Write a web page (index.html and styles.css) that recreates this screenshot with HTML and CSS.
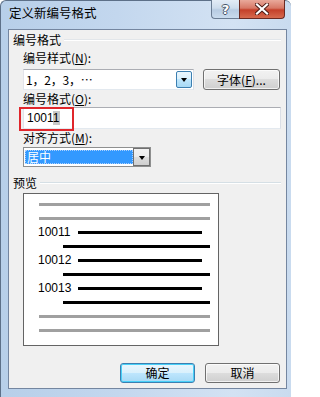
FILE: index.html
```html
<!DOCTYPE html>
<html>
<head>
<meta charset="utf-8">
<link rel="stylesheet" href="styles.css">
</head>
<body>
<div class="window">
  <div class="titlebar">
    <span class="title">定义新编号格式</span>
    <div class="caption">
      <div class="cbtn help"><span class="q">?</span></div>
      <div class="cbtn close">
        <svg width="14" height="12" viewBox="0 0 14 12"><path d="M2 1.5 L12 10.5 M12 1.5 L2 10.5" stroke="#4a1a14" stroke-width="4" stroke-linecap="square"/><path d="M2 1.5 L12 10.5 M12 1.5 L2 10.5" stroke="#ffffff" stroke-width="2.2" stroke-linecap="square"/></svg>
      </div>
    </div>
  </div>
  <div class="client">
    <div class="legend"><span>编号格式</span><i class="rule faint"></i></div>
    <div class="sub">
      <div class="label l1">编号样式(<u>N</u>):</div>
      <div class="row">
        <div class="combo">
          <span class="ctext">1，2，3，…</span>
          <div class="drop hot"><i class="arrow"></i></div>
        </div>
        <div class="btn font">字体(<u>F</u>)...</div>
      </div>
      <div class="label l2">编号格式(<u>O</u>):</div>
      <div class="inputwrap">
        <div class="input">1001<span class="sel">1</span></div>
        <div class="redbox"></div>
      </div>
      <div class="label l2">对齐方式(<u>M</u>):</div>
      <div class="select">
        <span class="selval">居中</span>
        <div class="drop"><i class="arrow"></i></div>
      </div>
    </div>
    <div class="legend l-prev"><span>预览</span><i class="rule"></i></div>
    <div class="sub">
      <div class="preview">
        <div class="pl"><i class="bar gray"></i></div>
        <div class="pl"><i class="bar gray"></i></div>
        <div class="pl num"><span class="n">10011</span><i class="bar first"></i></div>
        <div class="pl"><i class="bar cont"></i></div>
        <div class="pl num"><span class="n">10012</span><i class="bar first"></i></div>
        <div class="pl"><i class="bar cont"></i></div>
        <div class="pl num"><span class="n">10013</span><i class="bar first"></i></div>
        <div class="pl"><i class="bar cont"></i></div>
        <div class="pl"><i class="bar gray"></i></div>
        <div class="pl"><i class="bar gray"></i></div>
      </div>
    </div>
    <div class="buttons">
      <div class="btn ok">确定</div>
      <div class="btn cancel">取消</div>
    </div>
  </div>
</div>
</body>
</html>
```
FILE: styles.css
```css
* { box-sizing: border-box; }
html, body { margin: 0; padding: 0; }
body {
  width: 291px;
  height: 397px;
  overflow: hidden;
  font-family: "Noto Sans CJK SC", "Noto Sans", sans-serif;
  font-size: 12px;
  color: #000;
  background: #fff;
}
.window {
  width: 291px;
  height: 397px;
  padding: 0 4px 0 8px;
  background: linear-gradient(to right, #b7cfe9 0%, #c3d7ee 40%, #d3e2f3 80%, #c9dbef 100%);
  border-radius: 6px 6px 0 0;
  border-left: 1px solid #5d7088;
  border-top: 1px solid #5d7088;
  display: flex;
  flex-direction: column;
  margin-left: 0;
}
.window { padding-left: 7px; }
.titlebar {
  height: 28px;
  display: flex;
  align-items: flex-start;
  justify-content: space-between;
  margin-right: 1px;
}
.title {
  margin-top: 4px;
  margin-left: 1px;
  line-height: 16px;
  font-size: 12.5px;
  color: #000;
}
.caption {
  display: flex;
  margin-top: -1px;
  margin-right: 1px;
}
.cbtn {
  height: 19px;
  display: flex;
  align-items: center;
  justify-content: center;
  border: 1px solid #6a7c93;
  border-top: none;
}
.help {
  width: 28px;
  border-radius: 0 0 0 4px;
  border-right: none;
  background: linear-gradient(to bottom, #e3ecf6 0%, #cddcec 45%, #b7cbe2 55%, #c9dbee 100%);
}
.q {
  font-family: "DejaVu Sans", sans-serif;
  font-weight: bold;
  font-size: 13px;
  line-height: 13px;
  color: #fff;
  text-shadow: -1px 0 #47556a, 1px 0 #47556a, 0 -1px #47556a, 0 1px #47556a;
}
.close {
  width: 46px;
  border-radius: 0 0 4px 0;
  border-color: #6b2a22;
  background: linear-gradient(to bottom, #e9a99b 0%, #d77866 45%, #c4402a 55%, #d66a4e 100%);
}
.client {
  width: 279px;
  height: 360px;
  border: 1px solid #7486a0;
  background: #f0f0f0;
  padding: 3px 0 0 4px;
}
.legend {
  height: 14px;
  line-height: 14px;
  display: flex;
  align-items: center;
  margin-right: 5px;
}
.legend span { padding-right: 3px; }
.rule {
  flex: 1;
  height: 2px;
  border-top: 1px solid #d5dfe5;
  border-bottom: 1px solid #ffffff;
}
.rule.faint { border-top-color: #e2e6ea; }
.l-prev { margin-top: 9px; }
.sub {
  margin-left: 10px;
  margin-right: 5px;
}
.label {
  height: 14px;
  line-height: 14px;
}
.l1 { margin-top: 4px; }
.l2 { margin-top: 2px; }
.row {
  margin-top: 4px;
  height: 21px;
  display: flex;
  gap: 9px;
}
.combo {
  width: 171px;
  height: 21px;
  background: #fff;
  border: 1px solid #abadb3;
  border-color: #abadb3 #dbdfe6 #e3e9ef #e2e3ea;
  display: flex;
  align-items: center;
  justify-content: space-between;
  padding: 0 1px 0 2px;
}
.ctext {
  line-height: 14px;
  letter-spacing: -0.2px;
}
.drop {
  width: 16px;
  height: 17px;
  border: 1px solid #8a8a8a;
  border-radius: 2px;
  background: linear-gradient(to bottom, #f2f2f2 0%, #ebebeb 50%, #dddddd 50%, #cfcfcf 100%);
  display: flex;
  align-items: center;
  justify-content: center;
}
.drop.hot {
  border-color: #3c7fb1;
  background: linear-gradient(to bottom, #eaf6fd 0%, #d9f0fc 50%, #bee6fd 50%, #a7d9f5 100%);
}
.arrow {
  width: 0;
  height: 0;
  border-left: 3.5px solid transparent;
  border-right: 3.5px solid transparent;
  border-top: 4px solid #000;
  margin-top: 1px;
}
.btn {
  height: 21px;
  border: 1px solid #707070;
  border-radius: 3px;
  background: linear-gradient(to bottom, #f2f2f2 0%, #ebebeb 50%, #dddddd 50%, #cfcfcf 100%);
  display: flex;
  align-items: center;
  justify-content: center;
  line-height: 14px;
  box-shadow: inset 0 0 0 1px rgba(255,255,255,0.7);
}
.font { width: 77px; }
.inputwrap {
  margin-top: 1px;
  position: relative;
}
.input {
  width: 258px;
  height: 22px;
  background: #fff;
  border: 1px solid #abadb3;
  border-color: #abadb3 #dbdfe6 #e3e9ef #e2e3ea;
  padding-left: 3px;
  font-family: "Liberation Sans", Arial, sans-serif;
  font-size: 12px;
  line-height: 20px;
}
.sel {
  background: #c8c8c8;
}
.redbox {
  position: absolute;
  left: -4px;
  top: 0;
  width: 55px;
  height: 24px;
  border: 2px solid #e0262b;
}
.select {
  margin-top: 2px;
  width: 128px;
  height: 20px;
  background: #fff;
  border: 1px solid #8e8f8f;
  display: flex;
  align-items: center;
  padding: 0 0 0 1px;
}
.selval {
  width: 106px;
  height: 12px;
  background: #3399ff;
  color: #fff;
  line-height: 12px;
  padding-left: 1px;
  border: 1px dotted #aad0ff;
  box-sizing: content-box;
  font-size: 12px;
  display: flex;
  align-items: center;
}
.select .drop {
  margin-left: auto;
  height: 18px;
  width: 17px;
  border-radius: 0;
  border-color: #707070;
}
.preview {
  margin-top: 3px;
  width: 196px;
  height: 153px;
  background: #fff;
  border: 1px solid #646464;
  padding-top: 4px;
}
.pl {
  height: 14px;
  display: flex;
  align-items: flex-start;
  position: relative;
}
.bar {
  display: block;
  height: 3px;
  margin-top: 5px;
  background: #000;
}
.bar.gray {
  background: #a0a0a0;
  margin-left: 15px;
  width: 171px;
}
.bar.cont {
  margin-left: 39px;
  width: 147px;
}
.num { align-items: flex-start; }
.n {
  font-family: "Liberation Sans", Arial, sans-serif;
  font-size: 12px;
  line-height: 14px;
  margin-left: 14px;
  margin-top: -1px;
  width: 40px;
  flex: none;
}
.bar.first {
  width: 124px;
}
.buttons {
  margin-top: 17px;
  margin-right: 6px;
  display: flex;
  justify-content: flex-end;
  gap: 10px;
}
.buttons .btn {
  width: 75px;
  height: 20px;
}
.ok {
  border-color: #3c7fb1;
  background: linear-gradient(to bottom, #eaf6fd 0%, #d9f0fc 50%, #bee6fd 50%, #a7d9f5 100%);
  box-shadow: inset 0 0 0 1px #48d0f8;
}
```
